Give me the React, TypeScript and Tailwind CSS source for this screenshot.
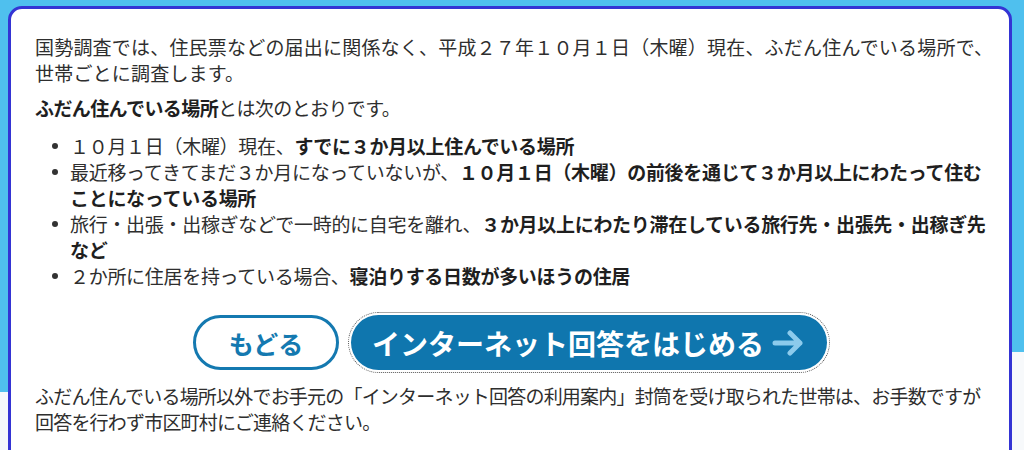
const JP = "font-['Meiryo','Noto_Sans_CJK_JP',sans-serif]";

type Part = { text: string; bold?: boolean };

// each entry is a list of rendered lines, each line a list of runs
const PLACES: Part[][][] = [
  [
    [
      { text: "１０月１日（木曜）現在、" },
      { text: "すでに３か月以上住んでいる場所", bold: true },
    ],
  ],
  [
    [
      { text: "最近移ってきてまだ３か月になっていないが、" },
      { text: "１０月１日（木曜）の前後を通じて３か月以上にわたって住む", bold: true },
    ],
    [{ text: "ことになっている場所", bold: true }],
  ],
  [
    [
      { text: "旅行・出張・出稼ぎなどで一時的に自宅を離れ、" },
      { text: "３か月以上にわたり滞在している旅行先・出張先・出稼ぎ先", bold: true },
    ],
    [{ text: "など", bold: true }],
  ],
  [
    [
      { text: "２か所に住居を持っている場合、" },
      { text: "寝泊りする日数が多いほうの住居", bold: true },
    ],
  ],
];

function ArrowIcon() {
  return (
    <svg width="34" height="26" viewBox="0 0 34 26" fill="none" aria-hidden="true">
      <path
        d="M3 13h25M18 3l10 10-10 10"
        stroke="#8ccbec"
        strokeWidth="5"
        strokeLinecap="round"
        strokeLinejoin="round"
      />
    </svg>
  );
}

export default function App() {
  return (
    <div className={`${JP} flex h-[450px] w-[1024px] overflow-hidden bg-[#4fc0ee]`}>
      {/* left backdrop strip */}
      <div className="flex w-2 flex-col">
        <div className="h-[392px]" />
        <div className="flex-1 bg-[#f4f8fb]" />
      </div>

      {/* notice card */}
      <div className="mt-1.5 h-[470px] w-[1004px] shrink-0 rounded-t-[14px] border-[3px] border-[#3434d4] bg-white px-6 pt-[25px] text-[19px] leading-[26px] text-[#2e2e2e]">
        <div className="tracking-[0.2px]">
          <div className="whitespace-nowrap">
            国勢調査では、住民票などの届出に関係なく、平成２７年１０月１日（木曜）現在、ふだん住んでいる場所で、
          </div>
          <div>世帯ごとに調査します。</div>
        </div>
        <p className="mt-[9px] tracking-[-0.6px]">
          <span className="font-bold text-[#1f1f1f]">ふだん住んでいる場所</span>とは次のとおりです。
        </p>

        <ul className="mt-3 tracking-[-0.3px]">
          {PLACES.map((lines, i) => (
            <li key={i} className="flex">
              <span className="flex h-[26px] w-[35px] shrink-0 items-center pl-[17px]">
                <span className="h-[6px] w-[6px] rounded-full bg-[#333]" />
              </span>
              <div className="flex flex-col">
                {lines.map((runs, k) => (
                  <div key={k} className="whitespace-nowrap">
                    {runs.map((p, j) =>
                      p.bold ? (
                        <span key={j} className="font-bold text-[#1f1f1f]">
                          {p.text}
                        </span>
                      ) : (
                        <span key={j}>{p.text}</span>
                      )
                    )}
                  </div>
                ))}
              </div>
            </li>
          ))}
        </ul>

        <div className="mt-[26px] flex justify-center gap-3">
          <button className="flex h-[55px] w-[146px] items-center justify-center rounded-full border-[3px] border-[#1479b0] bg-white text-[25px] font-bold text-[#1479b0]">
            もどる
          </button>
          <button className="flex h-[55px] w-[476px] items-center justify-center gap-2 rounded-full bg-[#0f76ae] text-[28px] font-bold text-white outline-1 outline-offset-2 outline-dotted outline-[#555]">
            インターネット回答をはじめる
            <ArrowIcon />
          </button>
        </div>

        <div className="mt-[13px] tracking-[-0.8px]">
          <div className="whitespace-nowrap">
            ふだん住んでいる場所以外でお手元の「インターネット回答の利用案内」封筒を受け取られた世帯は、お手数ですが
          </div>
          <div>回答を行わず市区町村にご連絡ください。</div>
        </div>
      </div>

      {/* right backdrop strip */}
      <div className="flex flex-1 flex-col">
        <div className="h-[352px]" />
        <div className="flex-1 bg-[#f7f9fb]" />
      </div>
    </div>
  );
}
